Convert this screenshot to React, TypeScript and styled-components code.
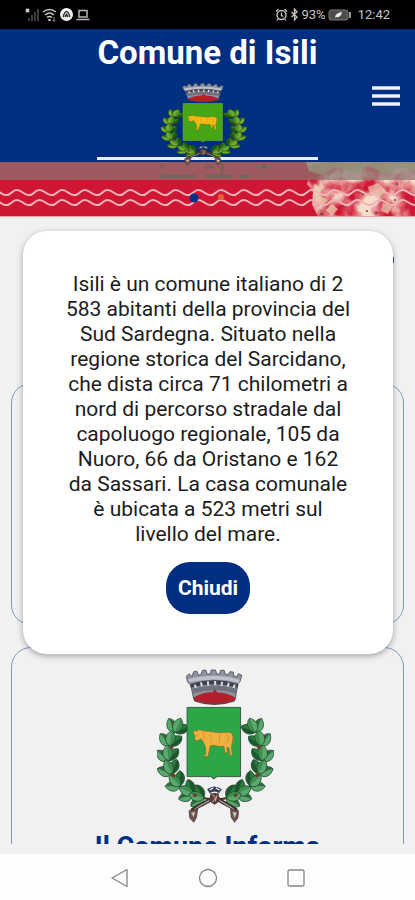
import React, { useState } from "react";
import styled, { createGlobalStyle } from "styled-components";

const BLUE = "#002f82";

const GlobalStyle = createGlobalStyle`
  * { box-sizing: border-box; }
  body {
    margin: 0;
    background: #f1f1f1;
    font-family: Roboto, "Liberation Sans", sans-serif;
  }
  button { font: inherit; border: 0; padding: 0; cursor: pointer; }
`;

const Screen = styled.div`
  display: flex;
  flex-direction: column;
  height: 100vh;
  overflow: hidden;
`;

const StatusBar = styled.div`
  display: flex;
  justify-content: space-between;
  align-items: center;
  height: 29px;
  flex: none;
  padding: 0 25px;
  background: #000;
  color: #c4c4c4;
  font-size: 13px;
  line-height: 16px;
`;

const StatusGroup = styled.div<{ $gap: number }>`
  display: flex;
  align-items: center;
  gap: ${(p) => p.$gap}px;
`;

const Clock = styled.span`
  margin-left: 4px;
`;

const AppArea = styled.div`
  position: relative;
  display: flex;
  flex-direction: column;
  flex: 1;
  min-height: 0;
  padding-bottom: 10px;
`;

const Header = styled.header`
  position: relative;
  z-index: 1;
  display: grid;
  grid-template-columns: 1fr auto 1fr;
  align-items: center;
  flex: none;
  height: 133px;
  padding: 0 15px;
  background: ${BLUE};
`;

const Brand = styled.div`
  grid-column: 2;
  align-self: start;
  display: flex;
  flex-direction: column;
  align-items: center;
  height: 131px;
  border-bottom: 3px solid #e9eefa;
`;

const Title = styled.h1`
  margin: 4px 0 10px;
  color: #fff;
  font-size: 33px;
  line-height: 40px;
  font-weight: 700;
  white-space: nowrap;
`;

const CrestArt = styled.svg<{ $bright: boolean }>`
  display: block;
  flex: none;
  box-sizing: content-box;
  padding: ${(p) => (p.$bright ? "0 8px 0 0" : "0 0 0 16px")};
`;

const MenuButton = styled.button`
  justify-self: end;
  display: flex;
  background: none;
`;

const Banner = styled.div`
  flex: none;
  height: 55px;
  background: #cf1634;
  svg { display: block; width: 100%; height: 100%; }
`;

const Feed = styled.main`
  display: flex;
  flex-direction: column;
  flex: 1;
  min-height: 0;
  overflow: hidden;
  gap: 22px;
  padding: 0 11px;
`;

const Toolbar = styled.div`
  display: flex;
  justify-content: flex-end;
  flex: none;
  height: 144px;
  padding: 35px 10px 0;
`;

const RoundButton = styled.button`
  width: 16px;
  height: 16px;
  border-radius: 50%;
  background: ${BLUE};
`;

const Card = styled.section`
  display: flex;
  flex-direction: column;
  align-items: center;
  flex: none;
  height: 242px;
  padding-top: 21px;
  border: 1px solid #7f96bf;
  border-radius: 20px;
`;

const CardTitle = styled.h2`
  margin: 7px 0 0;
  color: ${BLUE};
  font-size: 27px;
  line-height: 32px;
  font-weight: 700;
  white-space: nowrap;
`;

const Overlay = styled.div`
  position: absolute;
  inset: 0;
  z-index: 2;
  display: flex;
  align-items: center;
  justify-content: center;
  padding: 2px 22px 0 23px;
`;

const Dialog = styled.div`
  display: flex;
  flex-direction: column;
  align-items: center;
  gap: 15px;
  width: 100%;
  padding: 41px 41px 40px;
  border-radius: 24px;
  background: #fff;
  box-shadow: 0 2px 6px rgba(0, 0, 0, 0.32);
`;

const DialogText = styled.p`
  margin: 0;
  color: #1c1c1c;
  font-size: 21px;
  line-height: 25px;
  text-align: center;
`;

const CloseButton = styled.button`
  height: 52px;
  padding: 0 12px;
  border-radius: 24px;
  background: ${BLUE};
  color: #fff;
  font-size: 21px;
  font-weight: 700;
`;

const NavBar = styled.nav`
  display: flex;
  align-items: center;
  justify-content: center;
  gap: 68px;
  flex: none;
  height: 46px;
  padding-top: 2px;
  background: #fdfdfd;
`;

const NavButton = styled.button`
  display: flex;
  background: none;
`;

type Pt = [number, number, number];

// Stem points of the left branch: x, y and growth angle in degrees.
const STEM: Pt[] = [
  [92, 218, -66],
  [76, 258, -80],
  [72, 302, -92],
  [82, 342, -112],
  [108, 378, -134],
  [146, 402, -152],
  [178, 414, -164],
];

function Branch({ bright }: { bright: boolean }) {
  const light = bright ? "#6fae2c" : "#5aa86c";
  const mid = bright ? "#347f1c" : "#2a7b3e";
  const dark = bright ? "#14350f" : "#163d23";
  return (
    <g>
      <path
        d="M102 196C62 240 54 320 96 368C124 400 164 416 212 420"
        fill="none"
        stroke="#4b3524"
        strokeWidth="7"
      />
      {STEM.map(([x, y, a], i) =>
        [-46, 44, 0].map((d, j) => (
          <g key={`${i}-${j}`} transform={`translate(${x} ${y}) rotate(${a + d})`}>
            <path
              d="M0 0C8 -20 30 -22 46 -2C36 17 12 17 0 0Z"
              fill={j === 1 ? mid : light}
              stroke={dark}
              strokeWidth="2"
            />
            <path d="M2 0C14 14 34 14 45 -1Z" fill={j === 2 ? mid : dark} opacity="0.6" />
          </g>
        ))
      )}
      {STEM.filter((_, i) => i % 2 === 1).map(([x, y], i) => (
        <circle key={i} cx={x + 5} cy={y + 4} r="6" fill="#70402c" />
      ))}
    </g>
  );
}

function Crest({ width, height, bright = false }: { width: number; height: number; bright?: boolean }) {
  const green = bright ? "#45a514" : "#2ca647";
  const gold = bright ? "#f5b914" : "#efb042";
  return (
    <CrestArt
      $bright={bright}
      width={width}
      height={height}
      viewBox="38 28 350 464"
      preserveAspectRatio="none"
      role="img"
      aria-label="Stemma di Isili"
    >
      <Branch bright={bright} />
      <g transform="translate(424 0) scale(-1 1)">
        <Branch bright={bright} />
      </g>
      {/* ribbon and knotted stems */}
      <path
        d="M216 402C194 432 166 430 142 452M206 402C230 432 250 430 276 452"
        fill="none"
        stroke="#382b29"
        strokeWidth="12"
      />
      <path
        d="M212 408C194 428 168 432 148 450M210 408C230 428 250 434 270 450"
        fill="none"
        stroke="#a89c98"
        strokeWidth="4"
      />
      <path d="M134 452L160 446L156 472L148 487L136 474Z" fill="#6c5450" stroke="#3d2c2a" strokeWidth="2" />
      <path d="M258 446L282 452L280 474L270 487L260 472Z" fill="#6c5450" stroke="#3d2c2a" strokeWidth="2" />
      <path d="M140 458L152 456L148 472Z M264 456L277 458L270 474Z" fill="#cfc0b6" />
      <path d="M188 388Q210 372 232 388L224 400Q210 390 196 400Z" fill="#33405a" />
      <path d="M196 390L206 384M214 384L226 391" stroke="#dfe3ea" strokeWidth="4" />
      <path d="M198 400L222 400L226 424L210 434L194 424Z" fill="#5a3b36" />
      <path d="M204 404L214 414L204 426M218 406L212 424" stroke="#c0a79b" strokeWidth="3" fill="none" />
      {/* shield */}
      <path
        d="M128 143H288V350H218L208 357L198 350H128Z"
        fill={green}
        stroke={bright ? "#8fb82c" : "#244b34"}
        strokeWidth="2.5"
      />
      {/* heifer */}
      <path
        d="M149 212L158 214L163 209L176 213L196 215L222 219L250 217L261 220L266 229L264 244L261 260L263 286L256 289L254 265L247 262L249 278L242 279L238 259L224 260L208 256L197 258L194 275L190 290L178 291L184 282L183 261L176 246L169 237L160 243L150 240L152 229L147 220Z"
        fill={gold}
        stroke="#8d6a1d"
        strokeWidth="2"
        strokeLinejoin="round"
      />
      <path
        d="M174 217Q184 228 178 240M196 222Q204 236 200 248M226 223L224 249M246 223Q256 236 248 251M154 226L164 229M264 226L268 252"
        fill="none"
        stroke="#c98c24"
        strokeWidth="2"
      />
      {/* mural crown */}
      <path
        d="M126 50L134 42L142 50L148 36L157 34L162 46L169 45L174 32L184 31L188 43L197 43L200 31L213 31L217 43L225 43L228 32L239 32L243 44L251 45L256 36L266 37L268 49L277 51L281 42L292 47L286 66L280 72L272 119Q210 144 148 119L139 76L129 66Z"
        fill="#8f929f"
        stroke="#50515d"
        strokeWidth="2.5"
      />
      <path d="M132 58Q210 38 286 60L283 69Q210 50 134 68Z" fill="#bfc2cb" />
      <path d="M137 74Q210 50 282 74L279 84Q210 63 139 84Z" fill="#3f404c" />
      <path
        d="M151 75L156 88M169 68L174 84M190 65L192 82M212 64V82M233 66L230 82M253 69L248 85M271 75L264 90"
        stroke="#dcdee4"
        strokeWidth="6"
      />
      <path d="M142 87Q210 66 278 87L275 101Q210 82 144 102Z" fill="#70727e" />
      <path d="M147 114Q178 96 204 98L210 88L218 98Q248 98 273 114L271 121Q210 142 149 121Z" fill="#b3202b" />
      <path d="M148 119Q210 142 272 119L270 125Q210 146 150 125Z" fill="#6a3a43" />
    </CrestArt>
  );
}

const wave = (y: number) => {
  let d = `M-17 ${y + 2}`;
  for (let x = -17; x < 430; x += 22.7) {
    d += `C${x + 5} ${y + 3} ${x + 6} ${y - 3} ${x + 11} ${y - 3}S${x + 18} ${y + 2} ${x + 22.7} ${y + 2}`;
  }
  return d;
};

function BannerArt() {
  return (
    <svg viewBox="0 0 415 55" preserveAspectRatio="xMaxYMid slice" aria-hidden="true">
      <defs>
        <filter id="plaster" x="0" y="0" width="100%" height="100%">
          <feTurbulence type="fractalNoise" baseFrequency="0.05 0.05" numOctaves="4" seed="8" />
          <feColorMatrix values="0 0 0 0 0.9  0 0 0 0 0.72  0 0 0 0 0.6  1.8 1.6 0 0 -1.1" />
          <feComposite in2="SourceGraphic" operator="in" />
        </filter>
      </defs>
      <rect width="415" height="55" fill="#cf1634" />
      <path
        d="M306 0L310 12L307 22L313 30L312 42L318 55H415V0Z"
        fill="#e0b898"
        filter="url(#plaster)"
      />
      <path
        d="M314 22L322 26L319 33L328 38L321 46L316 40ZM368 25L378 21L386 28L380 35L371 34ZM332 42L338 47L332 54L326 48ZM383 41L392 44L388 52L381 49Z"
        fill="#ead2b0"
        opacity="0.7"
      />
      <path
        d="M320 52H323M342 44H344M362 32H364M366 49H368M375 51H377M394 38H396M396 22H398"
        stroke="#5d3a35"
        strokeWidth="2"
        opacity="0.7"
      />
      <rect width="415" height="18" fill="#8a7670" opacity="0.72" />
      <path d="M307 0H415V9L400 5L385 12L368 4L354 11L336 5L322 13L309 9Z" fill="#93927a" opacity="0.8" />
      <path d="M160 14H196M162 3V7M205 14H232M206 5H214M222 1V12M240 14H250M264 1V7" fill="none" stroke="#6b6258" strokeWidth="3" opacity="0.7" />
      <path d={wave(31)} fill="none" stroke="#f0b3b7" strokeWidth="2" />
      <path d={wave(41)} fill="none" stroke="#f0b3b7" strokeWidth="2" />
      <rect y="54" width="415" height="1" fill="#eda9ac" />
      <circle cx="194" cy="36" r="4.5" fill="#07308a" />
      <circle cx="221" cy="35" r="3" fill="#e2632b" />
    </svg>
  );
}

function PhoneStatus() {
  return (
    <StatusBar>
      <StatusGroup $gap={3}>
        <svg width="14" height="14" viewBox="0 0 14 14" aria-hidden="true">
          <path d="M3 13V10H5V13ZM6 13V7H8V13ZM9 13V4H11V13ZM12 13V1H14V13Z" fill="#3d3d3d" />
          <path d="M1 1L4 4M4 1L1 4" stroke="#cfcfcf" strokeWidth="1.8" />
        </svg>
        <svg width="15" height="14" viewBox="0 0 15 14" aria-hidden="true">
          <path d="M1 4Q7.500 -1 14 4M3 7Q7.500 3 12 7M5 9.500Q7.500 7.500 10 9.500" fill="none" stroke="#c8c8c8" strokeWidth="1.5" />
          <circle cx="7.500" cy="12" r="1.300" fill="#c8c8c8" />
          <path d="M12 9V13M10.500 12L12 13.500L13.500 12" stroke="#8c8c8c" fill="none" />
        </svg>
        <svg width="13" height="13" viewBox="0 0 13 13" aria-hidden="true">
          <circle cx="6.500" cy="6.500" r="6.500" fill="#f2f2f2" />
          <path d="M3 9Q6.500 -2 10 9M5 9L6.500 6.500L8 9" fill="none" stroke="#333" strokeWidth="1.500" />
        </svg>
        <svg width="14" height="12" viewBox="0 0 14 12" aria-hidden="true">
          <path d="M3 1.500H11V8H3ZM0.500 10.500H13.500" fill="none" stroke="#b5b5b5" strokeWidth="1.500" />
        </svg>
      </StatusGroup>
      <StatusGroup $gap={2}>
        <svg width="13" height="13" viewBox="0 0 13 13" aria-hidden="true">
          <circle cx="6.500" cy="7" r="4.500" fill="none" stroke="#c4c4c4" strokeWidth="1.400" />
          <path d="M1 3.500L3.500 1M12 3.500L9.500 1M6.500 4.500V7.500L8.500 8.500M3 11L2 12.500M10 11L11 12.500" fill="none" stroke="#c4c4c4" strokeWidth="1.300" />
        </svg>
        <svg width="9" height="13" viewBox="0 0 9 13" aria-hidden="true">
          <path d="M1.500 4L7 9L4.500 12V1L7 4L1.500 9" fill="none" stroke="#c4c4c4" strokeWidth="1.300" />
        </svg>
        <span>93%</span>
        <svg width="24" height="12" viewBox="0 0 24 12" aria-hidden="true">
          <rect x="1" y="1" width="19" height="10" rx="2" fill="#4c4c4c" stroke="#777" />
          <rect x="21" y="3" width="2" height="6" fill="#999" />
          <path d="M7 9Q7 4 14 3Q13 9 8 8Z" fill="#eee" />
        </svg>
        <Clock>12:42</Clock>
      </StatusGroup>
    </StatusBar>
  );
}

export default function App() {
  const [open, setOpen] = useState(true);
  return (
    <Screen>
      <GlobalStyle />
      <PhoneStatus />
      <AppArea>
        <Header>
          <Brand>
            <Title>Comune di Isili</Title>
            <Crest width={86} height={83} bright />
          </Brand>
          <MenuButton aria-label="Menu">
            <svg width="28" height="20" viewBox="0 0 28 20" aria-hidden="true">
              <path d="M0 2H28M0 10H28M0 18H28" stroke="#eef1fa" strokeWidth="3.500" />
            </svg>
          </MenuButton>
        </Header>
        <Banner>
          <BannerArt />
        </Banner>
        <Feed>
          <Toolbar>
            <RoundButton aria-label="Informazioni" onClick={() => setOpen(true)} />
          </Toolbar>
          <Card />
          <Card>
            <Crest width={117} height={155} />
            <CardTitle>Il Comune Informa</CardTitle>
          </Card>
        </Feed>
        {open && (
          <Overlay>
            <Dialog role="dialog" aria-modal="true" aria-describedby="town-info">
              <DialogText id="town-info">
                Isili è un comune italiano di 2 583 abitanti della provincia del Sud Sardegna. Situato
                nella regione storica del Sarcidano, che dista circa 71 chilometri a nord di percorso
                stradale dal capoluogo regionale, 105 da Nuoro, 66 da Oristano e 162 da Sassari. La casa
                comunale è ubicata a 523 metri sul livello del mare.
              </DialogText>
              <CloseButton onClick={() => setOpen(false)}>Chiudi</CloseButton>
            </Dialog>
          </Overlay>
        )}
      </AppArea>
      <NavBar aria-label="Sistema">
        <NavButton aria-label="Indietro">
          <svg width="20" height="20" viewBox="0 0 20 20" aria-hidden="true">
            <path d="M17 1.500V18.500L2 10Z" fill="none" stroke="#858585" strokeWidth="1.300" strokeLinejoin="round" />
          </svg>
        </NavButton>
        <NavButton aria-label="Home">
          <svg width="20" height="20" viewBox="0 0 20 20" aria-hidden="true">
            <circle cx="10" cy="10" r="8.500" fill="none" stroke="#858585" strokeWidth="1.300" />
          </svg>
        </NavButton>
        <NavButton aria-label="Recenti">
          <svg width="20" height="20" viewBox="0 0 20 20" aria-hidden="true">
            <rect x="2" y="2" width="16" height="16" rx="1.500" fill="none" stroke="#858585" strokeWidth="1.300" />
          </svg>
        </NavButton>
      </NavBar>
    </Screen>
  );
}
